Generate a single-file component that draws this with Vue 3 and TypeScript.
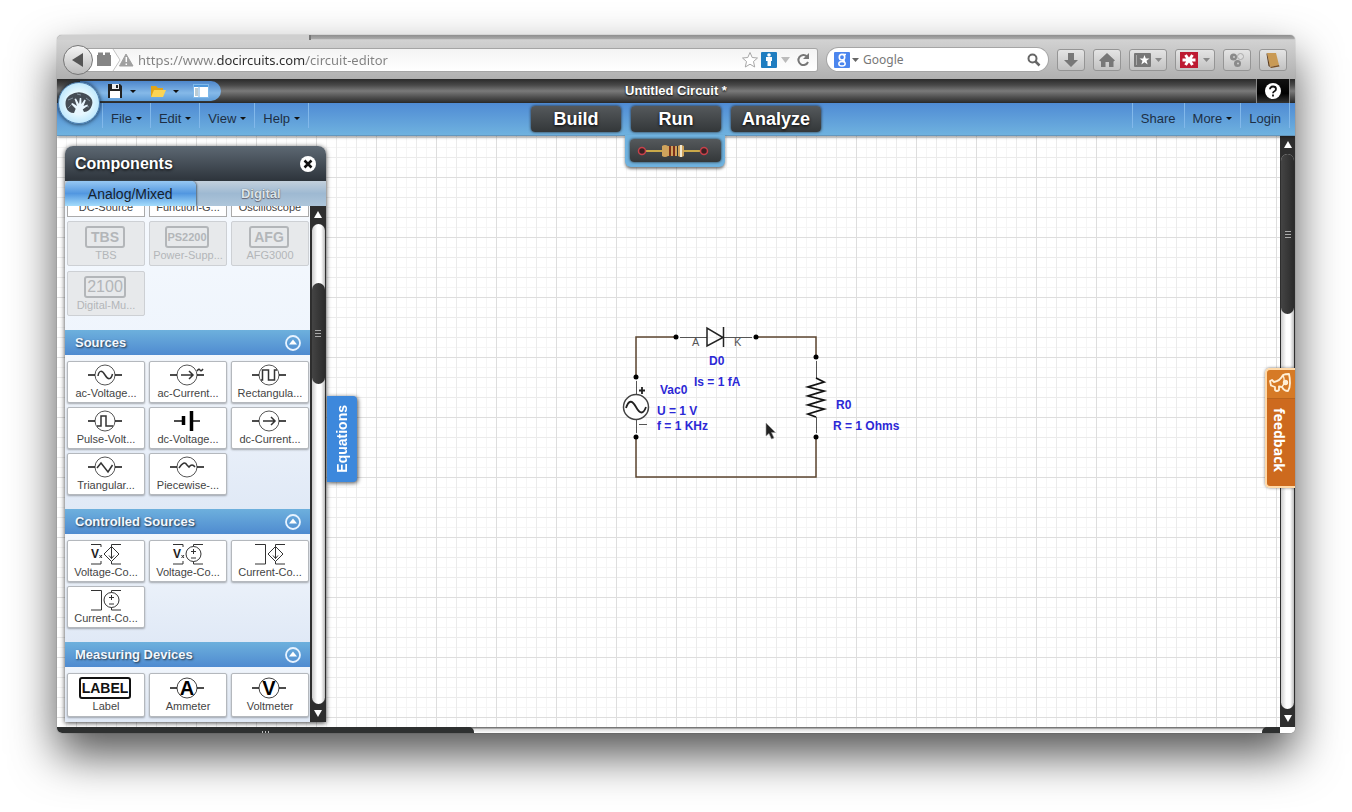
<script setup lang="ts">
import { ref } from 'vue'

interface Part {
  label: string
  icon: string
  text?: string
}

interface Section {
  title: string
  tall?: boolean
  parts: Part[]
}

const url = ref('https://www.docircuits.com/circuit-editor')
const query = ref('')
const menus = ['File', 'Edit', 'View', 'Help']
const modes = ['Build', 'Run', 'Analyze']

const clipped = ['DC-Source', 'Function-G...', 'Oscilloscope']
const instruments: Part[] = [
  { label: 'TBS', icon: 'box', text: 'TBS' },
  { label: 'Power-Supp...', icon: 'box small', text: 'PS2200' },
  { label: 'AFG3000', icon: 'box', text: 'AFG' },
  { label: 'Digital-Mu...', icon: 'box plain', text: '2100' },
]

const sections: Section[] = [
  {
    title: 'Sources',
    parts: [
      { label: 'ac-Voltage...', icon: 'sine' },
      { label: 'ac-Current...', icon: 'acCurrent' },
      { label: 'Rectangula...', icon: 'square' },
      { label: 'Pulse-Volt...', icon: 'pulse' },
      { label: 'dc-Voltage...', icon: 'battery' },
      { label: 'dc-Current...', icon: 'dcCurrent' },
      { label: 'Triangular...', icon: 'triangle' },
      { label: 'Piecewise-...', icon: 'piecewise' },
    ],
  },
  {
    title: 'Controlled Sources',
    parts: [
      { label: 'Voltage-Co...', icon: 'vccs' },
      { label: 'Voltage-Co...', icon: 'vcvs' },
      { label: 'Current-Co...', icon: 'cccs' },
      { label: 'Current-Co...', icon: 'ccvs' },
    ],
  },
  {
    title: 'Measuring Devices',
    tall: true,
    parts: [
      { label: 'Label', icon: 'box label', text: 'LABEL' },
      { label: 'Ammeter', icon: 'meter', text: 'A' },
      { label: 'Voltmeter', icon: 'meter', text: 'V' },
    ],
  },
]

const waves: Record<string, string> = {
  sine: 'M11 12C12 6 15 6 18 11S24 16 25.500 10',
  acCurrent: 'M12 11H24M20 7L24 11L20 15M28 7q2-3 3 -1t3-1',
  square: 'M10 16H11.500V6H17.500V16H23.500V6H26',
  pulse: 'M10 16H14V6H19V16H26',
  dcCurrent: 'M12 11H24M20 7L24 11L20 15',
  triangle: 'M10 12L14 7L21 16L25.500 9',
  piecewise: 'M10 12Q15 4 18 9L20 11Q23 7 26 11',
}
</script>

<template>
  <main class="desktop">
    <div class="window">
      <div class="tabstrip"><span class="tab"></span></div>

      <header class="browser">
        <button class="back" aria-label="Back">
          <svg width="14" height="14" viewBox="0 0 14 14"><path d="M12 0V14L1 7Z" fill="#555" /></svg>
        </button>
        <div class="address">
          <svg class="identity" width="51" height="22" viewBox="0 0 51 22">
            <path d="M0 0H26L33 11L26 22H0Z" fill="#fff" />
            <path d="M26 0L33 11L26 22" fill="none" stroke="#c4c4c4" />
            <path d="M10 6H24V17H10ZM11 3.500H16V7H11ZM18 3.500H23V7H18Z" fill="#858585" />
            <path d="M39 5L46 17H32.500Z" fill="#a0a0a0" stroke="#a0a0a0" stroke-linejoin="round" />
            <path d="M39.300 8V13M39.300 14.500V16" stroke="#fff" stroke-width="1.500" />
          </svg>
          <input v-model="url" class="url" type="text" aria-label="Address" />
          <svg class="urlicons" width="75" height="22" viewBox="0 0 75 22">
            <path d="M8 3.500L10.200 8.500L15.500 9L11.500 12.500L12.700 18L8 15.200L3.300 18L4.500 12.500L.5 9L5.800 8.500Z" fill="#fff" stroke="#a6a6a6" />
            <rect x="19" y="3" width="16" height="16" rx="1" fill="#1f7dc0" />
            <circle cx="27" cy="6" r="1.800" fill="#fff" />
            <path d="M24 8H30V12H29V17H25.500V12H24Z" fill="#fff" />
            <path d="M39 8H48L43.500 14Z" fill="#bbb" />
            <path d="M65 7.500A5 5 0 1 0 66 13" fill="none" stroke="#777" stroke-width="2" />
            <path d="M67 4V10H61Z" fill="#777" />
          </svg>
        </div>
        <div class="search">
          <svg width="28" height="22" viewBox="0 0 28 22">
            <rect x="0" y="3" width="16" height="16" rx="1" fill="#4c86ee" />
            <ellipse cx="8" cy="8.200" rx="2.700" ry="2.800" fill="none" stroke="#fff" stroke-width="1.600" />
            <ellipse cx="8" cy="14.800" rx="3.200" ry="2.300" fill="none" stroke="#fff" stroke-width="1.500" />
            <path d="M9 5.500H12M8 11Q10.500 11 10.500 13" fill="none" stroke="#fff" stroke-width="1.300" />
            <path d="M18 9H25L21.500 13Z" fill="#666" />
          </svg>
          <input v-model="query" type="text" placeholder="Google" aria-label="Search" />
          <svg width="14" height="14" viewBox="0 0 14 14">
            <circle cx="5.500" cy="5.500" r="4" fill="none" stroke="#666" stroke-width="2" />
            <path d="M8.500 8.500L12.500 12.500" stroke="#666" stroke-width="2.500" />
          </svg>
        </div>
        <div class="tools">
          <button aria-label="Downloads">
            <svg width="16" height="16" viewBox="0 0 16 16"><path d="M5 1H11V8H15L8 15L1 8H5Z" fill="#777" /></svg>
          </button>
          <button aria-label="Home">
            <svg width="16" height="16" viewBox="0 0 16 16"><path d="M8 1L16 8.500L14.500 9.500V15H10V10H6.500V15H2V9.500L0 8.500Z" fill="#777" /></svg>
          </button>
          <button class="wide" aria-label="Bookmarks">
            <svg width="28" height="16" viewBox="0 0 28 16">
              <rect x="0" y="1" width="17" height="14" rx="1" fill="#777" />
              <path d="M2.500 3V13" stroke="#aaa" />
              <path d="M10.500 3L11.800 6.500H15.500L12.500 8.700L13.700 12.500L10.500 10.200L7.300 12.500L8.500 8.700L5.500 6.500H9.200Z" fill="#fff" />
              <path d="M21 6H28L24.500 10Z" fill="#888" />
            </svg>
          </button>
          <button class="wide red" aria-label="Password manager">
            <svg width="30" height="16" viewBox="0 0 30 16">
              <rect width="18" height="16" fill="#bd1a31" />
              <path d="M2.500 8H15.500M5.500 3L12.500 13M12.500 3L5.500 13" stroke="#fff" stroke-width="3" />
              <path d="M23 6H30L26.500 10Z" fill="#888" />
            </svg>
          </button>
          <button aria-label="Extensions">
            <svg width="16" height="16" viewBox="0 0 16 16">
              <circle cx="4.500" cy="5" r="3.500" fill="#8a8a8a" /><circle cx="8.500" cy="11.500" r="3.500" fill="#8a8a8a" />
              <circle cx="11.500" cy="4.500" r="3" fill="#ddd" stroke="#aaa" /><circle cx="5" cy="5" r="1" fill="#ccc" /><circle cx="9" cy="11.500" r="1" fill="#ccc" />
            </svg>
          </button>
          <button aria-label="Notebook">
            <svg width="16" height="16" viewBox="0 0 16 16">
              <path d="M2 1L11 1L14 13L5 15Z" fill="#c99a55" /><path d="M2 1L5 15L3.500 14L1.500 2Z" fill="#5b3a1b" />
              <path d="M5 15L14 13L14.500 14.500L6 16Z" fill="#7a4f22" />
            </svg>
          </button>
        </div>
      </header>

      <div class="appbars">
        <div class="titlebar">
          <div class="quick">
            <button aria-label="Save">
              <svg width="16" height="16" viewBox="0 0 16 16">
                <path d="M1 1H13L15 3V15H1Z" fill="#222" /><rect x="5" y="1" width="7" height="5" fill="#eee" /><rect x="9" y="2" width="2" height="3" fill="#222" /><rect x="3" y="8" width="10" height="7" fill="#fff" />
              </svg>
            </button>
            <span class="caret"></span>
            <button aria-label="Open">
              <svg width="16" height="16" viewBox="0 0 16 16">
                <path d="M1 3H6L8 5H13V14H1Z" fill="#e2a416" /><path d="M4 7H16L13 14H1Z" fill="#fcd454" />
              </svg>
            </button>
            <span class="caret"></span>
            <button aria-label="Layout">
              <svg width="16" height="16" viewBox="0 0 16 16">
                <rect x=".5" y="1.500" width="15" height="13" fill="#fff" stroke="#7fb9ea" /><path d="M1 3H15" stroke="#4c96db" stroke-width="2" /><path d="M6 3V14" stroke="#77aede" /><path d="M2 6H5M2 8H5M2 10H5M2 12H5" stroke="#79a" />
              </svg>
            </button>
          </div>
          <h1>Untitled Circuit *</h1>
          <div class="helpside">
            <button class="help" aria-label="Help">
              <svg width="16" height="16" viewBox="0 0 16 16">
                <circle cx="8" cy="8" r="8" fill="#fff" />
                <path d="M5 6.300Q5 3.500 8 3.500T11 6Q11 7.500 9.500 8.300Q8 9 8 10.300M8 11.500V13.500" fill="none" stroke="#111" stroke-width="1.800" />
              </svg>
            </button>
          </div>
        </div>
        <div class="menubar">
          <nav class="menus">
            <button v-for="m in menus" :key="m">{{ m }}<span class="caret"></span></button>
          </nav>
          <div class="modes">
            <button v-for="m in modes" :key="m">{{ m }}</button>
          </div>
          <nav class="account">
            <a href="#share">Share</a>
            <button>More<span class="caret"></span></button>
            <a href="#login">Login</a>
          </nav>
        </div>
        <a class="logo" href="#home" aria-label="Home page">
          <svg width="28" height="24" viewBox="0 0 28 24">
            <path d="M1 16Q-1 8 5 4Q13 -1 21 3Q29 7 27 14Q25 21 19 21L17 17L11 17L9 22Q3 22 1 16Z" fill="#454c55" />
            <path d="M3 9L8 7M6 14L3 17M21 7L25 10M20 15L24 16M12 3L16 4" stroke="#8492a0" />
            <path d="M11 24L12 19L6 13L7.500 12L12 15L9.500 8L11 7.500L14 13L14.800 7H16.200L16.500 13L19.500 8.500L20.800 9.300L18.500 15L22.500 13.500L22.800 14.800L17 19L17 24Z" fill="#e8f6ff" />
          </svg>
        </a>
        <div class="runmenu">
          <button aria-label="Run with components">
            <svg width="72" height="14" viewBox="0 0 72 14">
              <path d="M9 7H63" stroke="#c9a94a" stroke-width="2" />
              <circle cx="5" cy="7" r="3.500" fill="#3b2023" stroke="#c8414a" stroke-width="1.500" /><circle cx="67" cy="7" r="3.500" fill="#3b2023" stroke="#c8414a" stroke-width="1.500" />
              <path d="M25 2Q28 0 31 2H41Q44 0 47 2V12Q44 14 41 12H31Q28 14 25 12Z" fill="#cfa35c" />
              <path d="M33 2V12M37 2V12" stroke="#7c2f1a" stroke-width="2" /><path d="M40.500 2V12" stroke="#333" /><path d="M44 1V13" stroke="#f3ead2" stroke-width="2" />
            </svg>
          </button>
        </div>
      </div>

      <div class="workspace">
        <div class="canvas">
          <svg class="circuit" width="300" height="170" viewBox="0 0 300 170">
            <g fill="none" stroke="#5c4630" stroke-width="1.500">
              <path d="M59 21H19V61M139 21H199V41M19 121V161H199V121" />
            </g>
            <g fill="none" stroke="#555" stroke-width="1">
              <path d="M63 21.500H90M106 21.500H135M199.500 45V62M199.500 101V117M19.500 65V78M19.500 104V117M22 108.500H30" />
            </g>
            <g fill="none" stroke="#222" stroke-width="1.500">
              <path d="M90 12V30L106 21.500ZM106.500 11V31" />
              <circle cx="19" cy="91" r="12.500" fill="#fff" stroke="#444" />
              <path d="M9 92Q13 80 19 91T29 91" stroke-width="1.800" />
              <path d="M22 74.500H28M25 71V78" stroke-width="1.800" />
              <path d="M199 62L207 66L191 71L207 75L191 80L207 84L191 89L207 93L191 98L199 101" stroke="#111" stroke-width="1.800" />
            </g>
            <g fill="#000">
              <circle v-for="[x, y] in [[59, 21], [139, 21], [199, 41], [199, 121], [19, 61], [19, 121]]" :key="`${x}-${y}`" :cx="x" :cy="y" r="2.500" />
            </g>
            <g class="pin"><text x="75" y="30">A</text><text x="117" y="30">K</text></g>
            <g class="value">
              <text x="92" y="49">D0</text>
              <text x="77" y="70">Is = 1 fA</text>
              <text x="43" y="78">Vac0</text>
              <text x="40" y="99">U = 1 V</text>
              <text x="40" y="114">f = 1 KHz</text>
              <text x="219" y="93">R0</text>
              <text x="216" y="114">R = 1 Ohms</text>
            </g>
            <path d="M149 107V120L152 117.500L154.500 123L157 122L154.500 116.500H158.500Z" fill="#222" stroke="#999" stroke-width=".6" />
          </svg>

          <section class="panel">
            <div class="panelhead">
              <h2>Components</h2>
              <button aria-label="Close">
                <svg width="16" height="16" viewBox="0 0 16 16"><circle cx="8" cy="8" r="8" fill="#fff" /><path d="M4.500 4.500L11.500 11.500M11.500 4.500L4.500 11.500" stroke="#111" stroke-width="2.500" /></svg>
              </button>
            </div>
            <div class="paneltabs">
              <button class="on">Analog/Mixed</button>
              <button class="off">Digital</button>
            </div>
            <div class="panelbody">
              <div class="list">
                <div class="grid cut">
                  <button v-for="c in clipped" :key="c"><span>{{ c }}</span></button>
                </div>
                <div class="grid devices">
                  <button v-for="p in instruments" :key="p.label" disabled class="part">
                    <b :class="p.icon">{{ p.text }}</b>
                    <span>{{ p.label }}</span>
                  </button>
                </div>
                <section v-for="s in sections" :key="s.title" class="group">
                  <button class="grouphead">
                    <span>{{ s.title }}</span>
                    <svg width="16" height="16" viewBox="0 0 16 16"><circle cx="8" cy="8" r="7" fill="none" stroke="#e8f3ff" stroke-width="1.800" /><path d="M8 4.500L12 9.500H4Z" fill="#fff" /></svg>
                  </button>
                  <div class="grid items" :class="{ tall: s.tall }">
                    <button v-for="(p, i) in s.parts" :key="i" class="part">
                      <b v-if="p.icon.startsWith('box')" :class="p.icon">{{ p.text }}</b>
                      <svg v-else width="36" height="22" viewBox="0 0 36 22" fill="none" stroke="#333">
                        <template v-if="waves[p.icon]">
                          <circle cx="18" cy="11" r="10" stroke="#555" />
                          <path d="M1 11H8M28 11H35" stroke="#111" stroke-width="1.500" />
                          <path :d="waves[p.icon]" stroke-width="1.500" />
                        </template>
                        <template v-else-if="p.icon === 'battery'">
                          <path d="M5 11H13M24 11H31" stroke="#111" stroke-width="1.500" />
                          <path d="M14.500 6V15" stroke="#000" stroke-width="3.500" />
                          <path d="M22.500 1V21" stroke="#000" stroke-width="3.500" />
                        </template>
                        <template v-else-if="p.icon === 'meter'">
                          <circle cx="18" cy="11" r="10" stroke="#444" />
                          <path d="M1 11H8M28 11H35" stroke="#111" stroke-width="1.500" />
                          <text x="18" y="18" class="glyph">{{ p.text }}</text>
                        </template>
                        <template v-else>
                          <template v-if="p.icon.startsWith('v')">
                            <path d="M4 1.500H14V4M4 21H14V18" />
                            <text x="4" y="15" class="vx">V</text><path d="M12.500 12L15 15M15 12L12.500 15" />
                          </template>
                          <path v-else d="M4 1.500H14.500V21H4" />
                          <path d="M34 1.500H24.500V21H34" />
                          <path v-if="p.icon.endsWith('ccs')" d="M24.500 3.500L32 11L24.500 18.500L17 11ZM24.500 3.500V15.500M22 12.500L24.500 15.500L27 12.500" fill="#fff" />
                          <template v-else>
                            <circle cx="24.500" cy="11" r="7.500" fill="#fff" />
                            <path d="M22 8.500H27M24.500 6V11M22 15H27" />
                          </template>
                        </template>
                      </svg>
                      <span>{{ p.label }}</span>
                    </button>
                  </div>
                </section>
              </div>
              <div class="scroll">
                <i class="up"></i>
                <div class="track"><div class="before"></div><div class="thumb"></div></div>
                <i class="down"></i>
              </div>
            </div>
          </section>

          <button class="equations"><span>Equations</span></button>
        </div>

        <div class="scroll page">
          <i class="up"></i>
          <div class="track"><div class="thumb"></div></div>
          <i class="down"></i>
        </div>
        <button class="feedback">
          <svg width="22" height="20" viewBox="0 0 22 20" fill="none" stroke="#ffefd6" stroke-width="1.800" stroke-linejoin="round">
            <path d="M1 8L3 7L5 9Q11 8 14 2Q16 1 20 1Q21 5 21 10T19 18Q15 18 13 14L10 13.500V17Q8 19 6 17V14L2 12.500Z" />
            <path d="M14 2Q17 9 13 14" stroke-width="1.300" /><circle cx="16.500" cy="9.500" r="1.800" fill="#ffefd6" />
          </svg>
          <span>feedback</span>
        </button>
      </div>

      <div class="hscroll"><div class="hthumb"><i></i><i></i><i></i></div><div class="hend"></div><div class="corner"></div></div>
    </div>
  </main>
</template>

<style>
body {
  margin: 0;
  background: #fff;
}
</style>

<style scoped>
* {
  box-sizing: border-box;
}
.desktop {
  min-height: 100vh;
  padding: 35px 57px 79px;
  display: flex;
  overflow: hidden;
  font-family: "Liberation Sans", Arial, sans-serif;
}
button {
  font: inherit;
  padding: 0;
  border: 0;
  background: none;
  color: inherit;
}
svg {
  display: block;
  flex: none;
}
a {
  color: inherit;
  text-decoration: none;
}
.window {
  flex: 1;
  min-width: 0;
  display: flex;
  flex-direction: column;
  border-radius: 5px;
  overflow: hidden;
  box-shadow: 0 22px 46px rgba(0, 0, 0, 0.68), 0 0 1px rgba(0, 0, 0, 0.6);
}
.tabstrip {
  height: 5px;
  background: linear-gradient(#8e8e8e, #aaa);
  border-bottom: 1px solid #c8c8c8;
}
.tab {
  display: block;
  width: 254px;
  height: 5px;
  background: #cfcfcf;
  border-right: 2px solid #777;
}
.browser {
  height: 39px;
  display: flex;
  align-items: center;
  padding: 0 8px 0 6px;
  background: linear-gradient(#d2d2d2, #b0b0b0);
}
.back {
  width: 30px;
  height: 30px;
  border-radius: 50%;
  border: 1px solid #777;
  background: linear-gradient(#f4f4f4, #bbb);
  display: flex;
  align-items: center;
  justify-content: center;
  position: relative;
  z-index: 1;
  flex: none;
}
.address {
  flex: 1;
  height: 22px;
  margin-left: -6px;
  display: flex;
  align-items: center;
  background: linear-gradient(#f4f4f4, #fff);
  border-radius: 0 2px 2px 0;
  box-shadow: 0 0 0 1px #a5a5a5;
}
.url {
  flex: 1;
  min-width: 0;
  border: 0;
  outline: 0;
  padding: 0;
  height: 22px;
  font: 13px "Noto Sans", sans-serif;
  color: transparent;
  background: linear-gradient(90deg, #808080 79px, #2c2c2c 79px, #2c2c2c 168px, #808080 168px);
  background-clip: text;
  -webkit-background-clip: text;
}
.search {
  width: 221px;
  height: 23px;
  margin-left: 10px;
  padding: 0 7px 0 7px;
  display: flex;
  align-items: center;
  gap: 1px;
  background: #fff;
  border-radius: 12px;
  box-shadow: 0 0 0 1px #a5a5a5;
}
.search input {
  flex: 1;
  min-width: 0;
  border: 0;
  outline: 0;
  padding: 0;
  background: none;
  font: 12px "Noto Sans", sans-serif;
}
.search input::placeholder {
  color: #777;
}
.tools {
  display: flex;
  gap: 8px;
  margin-left: 9px;
}
.tools button {
  width: 28px;
  height: 22px;
  display: flex;
  align-items: center;
  justify-content: center;
  border: 1px solid #959595;
  border-radius: 3px;
  background: linear-gradient(#e4e4e4, #c2c2c2);
}
.tools .wide {
  width: 38px;
}
.tools .red {
  width: 40px;
}
.appbars {
  position: relative;
  z-index: 2;
}
.titlebar {
  height: 24px;
  display: grid;
  grid-template-columns: 1fr auto 1fr;
  align-items: center;
  background: linear-gradient(#2a2a2a, #484848 25%, #7a7a7a 50%, #484848 80%, #2c2c2c);
}
.quick {
  width: 141px;
  height: 20px;
  margin-left: 23px;
  padding-left: 27px;
  display: flex;
  align-items: center;
  gap: 7px;
  border-radius: 0 10px 10px 0;
  background: linear-gradient(#4d86cb, #85b9e8 60%, #5e9cd8);
}
.caret {
  width: 0;
  height: 0;
  border: 3px solid transparent;
  border-top-color: #111;
  border-bottom: 0;
}
.quick .caret {
  margin-right: 7px;
}
h1 {
  margin: 0;
  font-size: 13px;
  line-height: 24px;
  color: #fff;
  text-shadow: 0 1px 2px #000;
}
.helpside {
  display: flex;
  justify-content: flex-end;
  height: 24px;
  padding-right: 5px;
}
.help {
  width: 34px;
  display: flex;
  align-items: center;
  justify-content: center;
  background: linear-gradient(#111, #000 60%, #333);
  border: solid #888;
  border-width: 0 1px;
}
.menubar {
  height: 33px;
  display: grid;
  grid-template-columns: 1fr auto 1fr;
  background: linear-gradient(#4f8bd4, #6fb2df);
  border-bottom: 1px solid #6597bd;
  box-shadow: 0 1px 3px rgba(0, 0, 0, 0.45);
  font-size: 13px;
  color: #1d2f45;
}
.menus {
  display: flex;
  padding-left: 45px;
}
.menus button,
.account > * {
  height: 25px;
  padding: 6px 8px 0;
  line-height: 19px;
  display: flex;
  align-items: center;
  gap: 4px;
  border-left: 1px solid #82b8ea;
}
.menus button:last-child {
  border-right: 1px solid #82b8ea;
}
.account > :last-child {
  border-right: 1px solid #82b8ea;
}
.account {
  display: flex;
  justify-content: flex-end;
  padding-right: 5px;
}
.modes {
  display: flex;
  gap: 10px;
  padding-top: 3px;
}
.modes button {
  width: 90px;
  height: 26px;
  border-radius: 4px;
  font-size: 18px;
  font-weight: bold;
  line-height: 24px;
  color: #fff;
  background: linear-gradient(#55595c, #333739);
  box-shadow: 0 0 3px #222;
  text-shadow: 0 1px 3px #000;
}
.logo {
  position: absolute;
  left: 1px;
  top: 3px;
  width: 42px;
  height: 42px;
  border-radius: 50%;
  border: 1px solid #4d7eae;
  background: radial-gradient(#e6f8ff 40%, #b5e4fd 80%, #7fc1ee);
  box-shadow: 0 0 4px #123;
  display: flex;
  align-items: center;
  justify-content: center;
}
.runmenu {
  position: absolute;
  left: 50%;
  top: 56px;
  width: 100px;
  margin-left: -51px;
  padding: 4px 4px 5px 5px;
  background: #6fb2df;
  border-radius: 0 0 6px 6px;
  box-shadow: 0 2px 3px rgba(0, 0, 0, 0.5);
}
.runmenu button {
  width: 100%;
  height: 23px;
  padding-right: 6px;
  display: flex;
  align-items: center;
  justify-content: center;
  border-radius: 4px;
  background: linear-gradient(#55595c, #333739);
  box-shadow: 0 0 3px #222;
}
.workspace {
  flex: 1;
  display: flex;
  position: relative;
}
.canvas {
  flex: 1;
  position: relative;
  padding: 10px 0 5px 8px;
  display: flex;
  align-items: flex-start;
  background-color: #fff;
  background-image:
    linear-gradient(90deg, #dedede 1px, transparent 1px),
    linear-gradient(#dedede 1px, transparent 1px),
    linear-gradient(90deg, #ebebeb 1px, transparent 1px),
    linear-gradient(#ebebeb 1px, transparent 1px),
    linear-gradient(90deg, #f5f5f5 1px, transparent 1px),
    linear-gradient(#f5f5f5 1px, transparent 1px);
  background-size: 60px 60px, 60px 60px, 20px 20px, 20px 20px, 10px 10px, 10px 10px;
  background-position: 19px 41px;
}
.circuit {
  position: absolute;
  left: 560px;
  top: 180px;
}
.pin {
  font-size: 11px;
  fill: #555;
}
.value {
  font-size: 12px;
  font-weight: bold;
  fill: #2c28d6;
}
.panel {
  width: 261px;
  border-radius: 8px 8px 0 0;
  box-shadow: 0 1px 5px rgba(0, 0, 0, 0.75);
}
.panelhead {
  height: 35px;
  padding: 0 10px;
  display: flex;
  align-items: center;
  justify-content: space-between;
  border-radius: 8px 8px 0 0;
  background: linear-gradient(#5d6873, #2d343b);
}
h2 {
  margin: 0;
  font-size: 16px;
  line-height: 32px;
  color: #fff;
  text-shadow: 0 1px 3px #000;
}
.paneltabs {
  height: 25px;
  display: flex;
  background: linear-gradient(#c3d0dc, #9eb9d2 50%, #aec6da);
}
.paneltabs button {
  flex: 1;
  line-height: 24px;
}
.paneltabs .on {
  font-size: 14px;
  color: #16222e;
  border-radius: 5px 5px 0 0;
  background: linear-gradient(#97c8f3, #5297e0 50%, #a4dcfb);
  box-shadow: 1px 0 2px #567;
}
.paneltabs .off {
  font-size: 13px;
  font-weight: bold;
  color: #dbe3ea;
  text-shadow: 0 0 1px #555, 0 1px 1px #667;
}
.panelbody {
  display: flex;
}
.list {
  flex: 1;
  background: linear-gradient(#f5f9fe, #dde9f8);
}
.grid {
  display: grid;
  grid-template-columns: repeat(3, 1fr);
  gap: 4px;
  padding: 0 1px 0 2px;
  font-size: 11px;
  color: #444;
}
.cut {
  height: 11px;
  overflow: hidden;
}
.cut button {
  height: 11px;
  display: flex;
  align-items: flex-end;
  justify-content: center;
  overflow: hidden;
  background: #fff;
  border: solid #aaa;
  border-width: 0 1px 1px;
}
.cut span {
  line-height: 13px;
  padding-bottom: 2px;
}
.devices {
  row-gap: 5px;
  padding-top: 4px;
  padding-bottom: 14px;
}
.part {
  height: 42px;
  padding-top: 2px;
  display: flex;
  flex-direction: column;
  align-items: center;
  background: #fff;
  border: 1px solid #b4b8bd;
  border-radius: 2px;
  box-shadow: 0 1px 2px rgba(0, 0, 0, 0.3);
}
.part span {
  line-height: 14px;
}
.part svg,
.box {
  margin-right: 2px;
}
.devices .part {
  height: 45px;
  padding-top: 4px;
  color: #b3b6b9;
  background: #e7e9eb;
  border-color: #cdd0d4;
  box-shadow: none;
}
.tall .part {
  height: 44px;
  padding-top: 3px;
}
.box {
  height: 22px;
  min-width: 40px;
  padding: 0 1px;
  border: 2px solid #b3b6b9;
  border-radius: 3px;
  font-size: 14px;
  line-height: 18px;
}
.box.small {
  font-size: 11px;
  padding: 0;
}
.box.plain {
  font-size: 16px;
  font-weight: normal;
}
.box.label {
  border-color: #111;
  color: #111;
}
.glyph {
  font-size: 20px;
  font-weight: bold;
  text-anchor: middle;
  fill: #000;
  stroke: none;
}
.vx {
  font-size: 12px;
  font-weight: bold;
  fill: #222;
  stroke: none;
}
.grouphead {
  width: 100%;
  height: 25px;
  padding: 0 9px 0 10px;
  display: flex;
  align-items: center;
  justify-content: space-between;
  font-size: 13px;
  font-weight: bold;
  line-height: 20px;
  color: #f2f8ff;
  text-shadow: 1px 1px 2px #234;
  background: linear-gradient(#6db0dd, #4f8bd0);
}
.items {
  padding-top: 6px;
  padding-bottom: 14px;
}
.group {
  background: linear-gradient(#f7fafe, #e0e9f6);
}
.group:last-child .items {
  padding-bottom: 5px;
}
.scroll {
  width: 16px;
  display: flex;
  flex-direction: column;
  align-items: center;
  background: #2e2e2e;
  gap: 6px;
  padding: 5px 1px;
}
.up,
.down {
  border: 4px solid transparent;
  height: 0;
}
.up {
  border-top: 0;
  border-bottom: 7px solid #fff;
}
.down {
  border-bottom: 0;
  border-top: 7px solid #fff;
}
.track {
  flex: 1;
  width: 13px;
  border-radius: 7px;
  background: linear-gradient(90deg, #ccc, #fff 40%, #fff 70%, #bbb);
}
.before {
  height: 59px;
}
.thumb {
  height: 101px;
  border-radius: 7px;
  background:
    linear-gradient(#aaa, #aaa) center calc(50% - 3px) / 6px 1px no-repeat,
    linear-gradient(#aaa, #aaa) center / 6px 1px no-repeat,
    linear-gradient(#aaa, #aaa) center calc(50% + 3px) / 6px 1px no-repeat,
    linear-gradient(90deg, #444, #2b2b2b);
}
.page {
  width: 15px;
}
.page .thumb {
  height: 160px;
}
.equations {
  position: absolute;
  left: 270px;
  top: 260px;
  width: 30px;
  height: 86px;
  border-radius: 0 4px 4px 0;
  background: #3d88dc;
  box-shadow: 1px 1px 4px rgba(0, 0, 0, 0.7);
  font-size: 14px;
  font-weight: bold;
  color: #fff;
  display: flex;
  align-items: center;
  justify-content: center;
}
.equations span {
  writing-mode: vertical-rl;
  transform: rotate(180deg);
}
.feedback {
  position: absolute;
  right: 0;
  top: 232px;
  width: 30px;
  height: 120px;
  padding: 3px 3px 0 0;
  display: flex;
  flex-direction: column;
  align-items: center;
  gap: 15px;
  border: 2px solid #ffd9a8;
  border-right: 0;
  border-radius: 5px 0 0 5px;
  background: linear-gradient(#d67a26 28px, #b8631c 28px, #b8631c 29px, #cd6a1e 29px);
  box-shadow: 0 0 3px rgba(0, 0, 0, 0.5);
  color: #fff;
  font: bold 14px "Open Sans", sans-serif;
}
.feedback span {
  writing-mode: vertical-rl;
}
.hscroll {
  height: 6px;
  display: flex;
  background: linear-gradient(#777 1px, #ddd 2px, #fff);
}
.hthumb {
  width: 417px;
  background: #2e3030;
  border-radius: 0 5px 0 0;
  display: flex;
  gap: 2px;
  justify-content: center;
  align-items: flex-end;
}
.hthumb i {
  width: 1px;
  height: 2px;
  background: #bbb;
}
.hend {
  width: 18px;
  margin-left: auto;
  border-radius: 5px 0 0 0;
  background: #2e3030;
}
.corner {
  width: 15px;
  background: #fff;
}
</style>
